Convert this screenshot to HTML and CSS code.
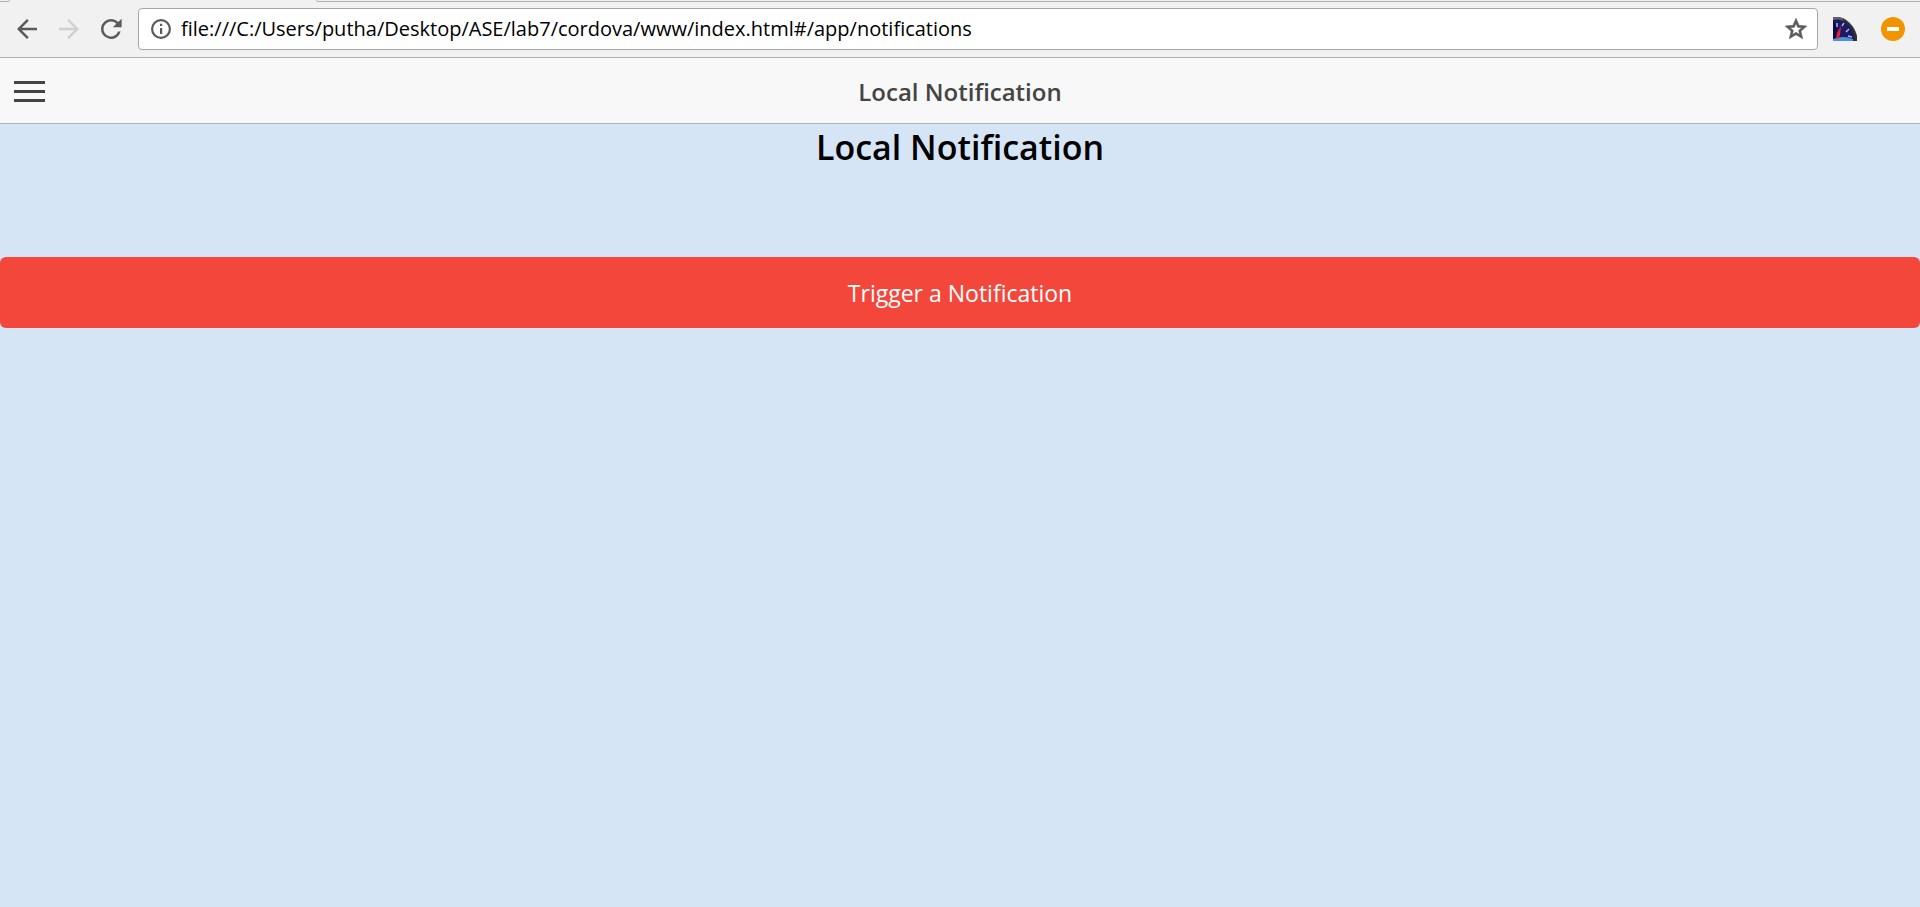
FILE: index.html
```html
<!DOCTYPE html>
<html lang="en">
<head>
<meta charset="utf-8">
<title>Local Notification</title>
<link rel="stylesheet" href="styles.css">
</head>
<body>
<div class="tab-strip"><span class="strip-start"></span><span class="active-tab"></span><span class="strip-rest"></span></div>
<div class="toolbar">
  <button class="nav-button" aria-label="Back"><svg viewBox="0 0 24 24"><path d="M20 11H7.8l5.6-5.6L12 4l-8 8 8 8 1.4-1.4L7.8 13H20z"/></svg></button>
  <button class="nav-button disabled" aria-label="Forward" disabled><svg viewBox="0 0 24 24"><path d="M12 4l-1.4 1.4 5.6 5.6H4v2h12.2l-5.6 5.6L12 20l8-8z"/></svg></button>
  <button class="nav-button" aria-label="Reload"><svg viewBox="0 0 24 24"><path d="M17.65 6.35C16.2 4.9 14.21 4 12 4a8 8 0 1 0 7.73 10h-2.08A6 6 0 1 1 12 6c1.66 0 3.14.69 4.22 1.78L13.5 10.5H20.5V3.8z"/></svg></button>
  <div class="address-bar">
    <svg class="info-icon" viewBox="0 0 24 24"><path d="M11 17h2.2v-6H11zM11 9h2.2V6.8H11zM12 2a10 10 0 1 0 0 20 10 10 0 0 0 0-20zm0 17.8a7.8 7.8 0 1 1 0-15.6 7.8 7.8 0 0 1 0 15.6z"/></svg>
    <input class="address" type="text" aria-label="Address" value="file:///C:/Users/putha/Desktop/ASE/lab7/cordova/www/index.html#/app/notifications" spellcheck="false">
    <button class="star-button" aria-label="Bookmark this page"><svg viewBox="0 0 24 24"><path stroke-width=".5" d="M22 9.24l-7.19-.62L12 2 9.19 8.63 2 9.24l5.46 4.73L5.82 21 12 17.27 18.18 21l-1.63-7.03zM12 15.1l-3.3 2 .88-3.76-2.92-2.53 3.85-.33L12 6.9l1.5 3.58 3.85.33-2.92 2.53.88 3.76z"/></svg></button>
  </div>
  <button class="extension" aria-label="Speed gauge">
    <svg viewBox="0 0 24 24">
      <path fill="#5d6367" d="M0 0h7l5 2 5 4 4 5 3 7v6H0z"/>
      <path fill="#2b3034" d="M9 1l5 3 5 5 3 5 2 6v4h-4z"/>
      <path fill="#1b1865" d="M0 3q8-2 13 3 7 6 8 15v3H0z"/>
      <path fill="#0c0a49" d="M0 4l4 6-1 12H0z"/>
      <path fill="#4c91d9" d="M0 22q10-4 20 0v2H0z"/>
      <path stroke="#b9b6dc" stroke-width="1.5" d="M4 6v4M11 6l-2 3M16 12l-3 3M19 20l-4-1"/>
      <path fill="#f51f31" d="M8 9L7 18l-2 4H3l1-6z"/>
    </svg>
  </button>
  <button class="extension" aria-label="Blocker">
    <svg viewBox="0 0 24 24"><circle cx="12" cy="12" r="12" fill="#f29400"/><path fill="#fff" d="M6 10h12v4H6z"/></svg>
  </button>
</div>
<header class="app-header">
  <button class="menu-button" aria-label="Menu"><span></span><span></span><span></span></button>
  <div class="app-title">Local Notification</div>
</header>
<main class="content">
  <h1 class="heading">Local Notification</h1>
  <button class="trigger">Trigger a Notification</button>
</main>
</body>
</html>
```
FILE: styles.css
```css
* { box-sizing: border-box; }
body {
  margin: 0;
  min-height: 100vh;
  display: flex;
  flex-direction: column;
  background: #d5e5f5;
  font-family: "Segoe UI", "Open Sans", "Noto Sans", sans-serif;
}
button { border: 0; padding: 0; background: none; font: inherit; }
svg { display: block; width: 100%; height: 100%; }
.tab-strip { display: flex; height: 2px; background: #f1f1f1; }
.strip-start { width: 9px; border-bottom: 1px solid #b0b0b0; }
.active-tab { width: 308px; border: solid #b0b0b0; border-width: 0 1px; height: 1px; }
.strip-rest { flex: 1; border-bottom: 1px solid #b0b0b0; }
.toolbar {
  display: flex;
  align-items: center;
  height: 56px;
  padding: 0 15px 2px 12px;
  gap: 12px;
  background: #f1f1f1;
  border-bottom: 1px solid #b0b0b0;
}
.nav-button { width: 30px; height: 30px; fill: #5a5a5a; }
.disabled { fill: #d0d0d0; }
.address-bar {
  flex: 1;
  display: flex;
  align-items: center;
  height: 42px;
  padding: 0 8px 0 10px;
  border: 1px solid #a6a6a6;
  border-radius: 4px;
  background: #fff;
}
.info-icon { width: 24px; height: 24px; fill: #5a5a5a; }
.address {
  flex: 1;
  min-width: 0;
  height: 32px;
  padding: 0 8px;
  border: 0;
  outline: 0;
  background: none;
  color: #000;
  font-family: inherit;
  font-size: 20px;
}
.star-button { width: 26px; height: 26px; fill: #5a5a5a; stroke: #5a5a5a; }
.extension { width: 24px; height: 24px; margin-left: 3px; }
.extension + .extension { margin-left: 12px; }
.app-header {
  display: grid;
  grid-template-columns: 48px 1fr 48px;
  align-items: center;
  height: 66px;
  background: #f8f8f8;
  border-bottom: 1px solid #b2b2b2;
}
.menu-button { display: grid; gap: 6px; padding: 2px 3px 0 14px; }
.menu-button span { height: 3px; background: #444; }
.app-title {
  padding-top: 2px;
  text-align: center;
  font-size: 24px;
  font-weight: 600;
  line-height: 32px;
  color: #444;
}
.content { text-align: center; }
.heading { margin: 0 0 87px; font-size: 34px; font-weight: 600; line-height: 46px; color: #000; }
.trigger {
  display: block;
  width: 100%;
  padding: 19px 12px 17px;
  border-radius: 6px;
  background: #f2473a;
  color: #fff;
  font-size: 23px;
  line-height: 35px;
}
```
